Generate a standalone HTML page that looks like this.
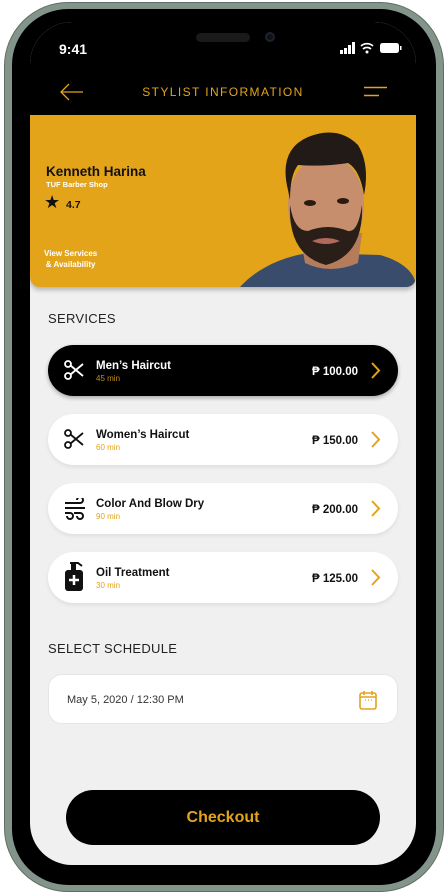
<!DOCTYPE html>
<html><head><meta charset="utf-8"><style>
*{margin:0;padding:0;box-sizing:border-box}
body{width:448px;height:894px;background:#fff;position:relative;overflow:hidden;font-family:"Liberation Sans",sans-serif}
.frame{position:absolute;left:4px;top:2px;width:440px;height:890px;border-radius:64px;background:#83948b;border:1px solid #5f6e66}
.inner{position:absolute;left:12px;top:9px;width:424px;height:876px;border-radius:56px;background:#000}
.screen{position:absolute;left:30px;top:22px;width:386px;height:843px;border-radius:42px;background:#f0f0f0;overflow:hidden}
.top{position:absolute;left:0;top:0;width:386px;height:110px;background:#000}
.card{position:absolute;left:0;top:93px;width:386px;height:172px;background:#e3a41a;border-radius:0 0 10px 10px;overflow:hidden;box-shadow:0 3px 5px rgba(0,0,0,.25)}
.abs{position:absolute}
.svc{position:absolute;left:18px;width:350px;height:51px;border-radius:26px;background:#fff;box-shadow:0 2px 4px rgba(0,0,0,.08)}
.svc .n{position:absolute;left:48px;top:15px;font-size:11.5px;font-weight:bold;color:#111}
.svc .m{position:absolute;left:48px;top:29px;font-size:8px;color:#e3a41a}
.svc .p{position:absolute;right:40px;top:21px;font-size:11.5px;font-weight:bold;color:#111}
.svc .ch{position:absolute;right:17px;top:17px}
.svc .ic{position:absolute;left:16px;top:15px}
.h{position:absolute;left:18px;font-size:13px;color:#222;letter-spacing:.3px}
</style></head><body>
<div class="frame"></div>
<div class="inner"></div>
<div class="screen">
 <div class="top"></div>
 <div class="abs" style="left:166px;top:11px;width:54px;height:9px;border-radius:5px;background:#1a1a1a"></div>
 <div class="abs" style="left:235px;top:10px;width:10px;height:10px;border-radius:5px;background:#111;border:2px solid #1d2230"></div>
 <div class="abs" style="left:29px;top:19px;color:#fff;font-size:14px;font-weight:bold">9:41</div>
 <svg class="abs" style="left:310px;top:20px" width="64" height="12"><rect x="0" y="8" width="3" height="4" fill="#fff"/><rect x="4" y="6" width="3" height="6" fill="#fff"/><rect x="8" y="3" width="3" height="9" fill="#fff"/><rect x="12" y="0" width="3" height="12" fill="#fff"/><path d="M21 4a9 9 0 0 1 12 0M23 7a6 6 0 0 1 8 0" stroke="#fff" stroke-width="1.6" fill="none"/><circle cx="27" cy="10" r="1.5" fill="#fff"/><rect x="40" y="1" width="19" height="10" rx="2.5" fill="#fff"/><rect x="60" y="4" width="1.5" height="4" fill="#fff"/></svg>
 <svg class="abs" style="left:29px;top:60px" width="25" height="20"><path d="M24 10H2M10 2L2 10l8 8" stroke="#e3a41a" stroke-width="1.3" fill="none"/></svg>
 <div class="abs" style="left:0;width:386px;top:63px;text-align:center;color:#e3a41a;font-size:12px;letter-spacing:1.4px">STYLIST INFORMATION</div>
 <svg class="abs" style="left:334px;top:64px" width="24" height="12"><path d="M0 1.5h23M0 9.5h15" stroke="#e3a41a" stroke-width="1.5"/></svg>
 <div class="card">
  <div class="abs" style="left:16px;top:49px;font-size:13.5px;font-weight:bold;color:#111">Kenneth Harina</div>
  <div class="abs" style="left:16px;top:65px;font-size:7.5px;font-weight:bold;color:#fff">TUF Barber Shop</div>
  <div class="abs" style="left:14px;top:77px;font-size:18px;color:#111">★</div>
  <div class="abs" style="left:36px;top:84px;font-size:10.5px;font-weight:bold;color:#111">4.7</div>
  <div class="abs" style="left:14px;top:133px;font-size:8px;font-weight:bold;color:#fff;text-align:center;line-height:11px">View Services<br>&amp; Availability</div>
  <svg class="abs" style="left:200px;top:0" width="186" height="172">
   <path d="M10 172C30 150 60 140 80 138L150 140C172 146 186 158 186 172Z" fill="#3a4c6c"/>
   <path d="M70 120L75 148Q100 160 128 148L132 118Z" fill="#b57c5c"/>
   <ellipse cx="96" cy="90" rx="38" ry="50" fill="#c68e6c"/>
   <path d="M60 90Q58 140 96 150Q134 140 132 90Q128 118 118 116Q98 108 78 116Q64 116 60 90Z" fill="#2a1e18"/>
   <path d="M82 126Q96 120 110 126Q96 132 82 126Z" fill="#b06a5a"/>
   <path d="M58 75Q48 35 78 22Q108 10 128 30Q140 50 134 80Q130 55 118 48Q93 52 68 50Q60 60 60 85Z" fill="#221a16"/>
   <ellipse cx="80" cy="88" rx="6" ry="3" fill="#2a1a12"/><ellipse cx="113" cy="86" rx="6" ry="3" fill="#2a1a12"/>
  </svg>
 </div>
 <div class="h" style="top:289px">SERVICES</div>
 <div class="svc" style="top:323px;background:#000;box-shadow:0 2px 4px rgba(0,0,0,.3)">
  <svg class="ic" width="20" height="20" viewBox="0 0 20 20"><circle cx="4" cy="4" r="3" stroke="#fff" stroke-width="1.8" fill="none"/><circle cx="4" cy="16" r="3" stroke="#fff" stroke-width="1.8" fill="none"/><path d="M6.5 5.5L19 16M6.5 14.5L19 4" stroke="#fff" stroke-width="1.8"/></svg>
  <div class="n" style="color:#fff">Men’s Haircut</div><div class="m" style="color:#c88e10">45 min</div>
  <div class="p" style="color:#fff">₱ 100.00</div>
  <svg class="ch" width="10" height="17"><path d="M1 1l7 7.5L1 16" stroke="#e3a41a" stroke-width="2" fill="none"/></svg>
 </div>
 <div class="svc" style="top:392px">
  <svg class="ic" width="20" height="20" viewBox="0 0 20 20"><circle cx="4" cy="4" r="3" stroke="#111" stroke-width="1.8" fill="none"/><circle cx="4" cy="16" r="3" stroke="#111" stroke-width="1.8" fill="none"/><path d="M6.5 5.5L19 16M6.5 14.5L19 4" stroke="#111" stroke-width="1.8"/></svg>
  <div class="n">Women’s Haircut</div><div class="m">60 min</div>
  <div class="p">₱ 150.00</div>
  <svg class="ch" width="10" height="17"><path d="M1 1l7 7.5L1 16" stroke="#e3a41a" stroke-width="2" fill="none"/></svg>
 </div>
 <div class="svc" style="top:461px">
  <svg class="ic" width="22" height="22" viewBox="0 0 22 22"><path d="M1 5h15a3 3 0 1 0-3-3M1 10h20M1 15h5a3 3 0 1 1-3 3M10 15h6a3 3 0 1 1-3 3" stroke="#111" stroke-width="2" fill="none"/></svg>
  <div class="n">Color And Blow Dry</div><div class="m">90 min</div>
  <div class="p">₱ 200.00</div>
  <svg class="ch" width="10" height="17"><path d="M1 1l7 7.5L1 16" stroke="#e3a41a" stroke-width="2" fill="none"/></svg>
 </div>
 <div class="svc" style="top:530px">
  <svg class="ic" style="top:10px" width="22" height="30" viewBox="0 0 22 30"><path d="M6 1h8l4 3" stroke="#111" stroke-width="2" fill="none"/><rect x="7" y="2" width="5" height="6" fill="#111"/><rect x="1" y="8" width="18" height="21" rx="3" fill="#111"/><path d="M10 13v10M5 18h10" stroke="#fff" stroke-width="2.5"/></svg>
  <div class="n">Oil Treatment</div><div class="m">30 min</div>
  <div class="p">₱ 125.00</div>
  <svg class="ch" width="10" height="17"><path d="M1 1l7 7.5L1 16" stroke="#e3a41a" stroke-width="2" fill="none"/></svg>
 </div>
 <div class="h" style="top:619px">SELECT SCHEDULE</div>
 <div class="abs" style="left:18px;top:652px;width:350px;height:50px;border-radius:14px;background:#fff;border:1px solid #e6e6e6">
  <div class="abs" style="left:18px;top:19px;font-size:11px;color:#333">May 5, 2020 / 12:30 PM</div>
  <svg class="abs" style="left:310px;top:15px" width="18" height="20"><rect x="1" y="3" width="16" height="16" rx="2" stroke="#e3a41a" stroke-width="1.6" fill="none"/><path d="M1 7h16M5 1v4M13 1v4" stroke="#e3a41a" stroke-width="1.6"/><path d="M6 10h1M9 10h1M12 10h1" stroke="#e3a41a" stroke-width="1.2"/></svg>
 </div>
 <div class="abs" style="left:36px;top:768px;width:314px;height:55px;border-radius:28px;background:#000;color:#e3a41a;font-size:16px;font-weight:bold;text-align:center;line-height:55px">Checkout</div>
</div>
</body></html>
